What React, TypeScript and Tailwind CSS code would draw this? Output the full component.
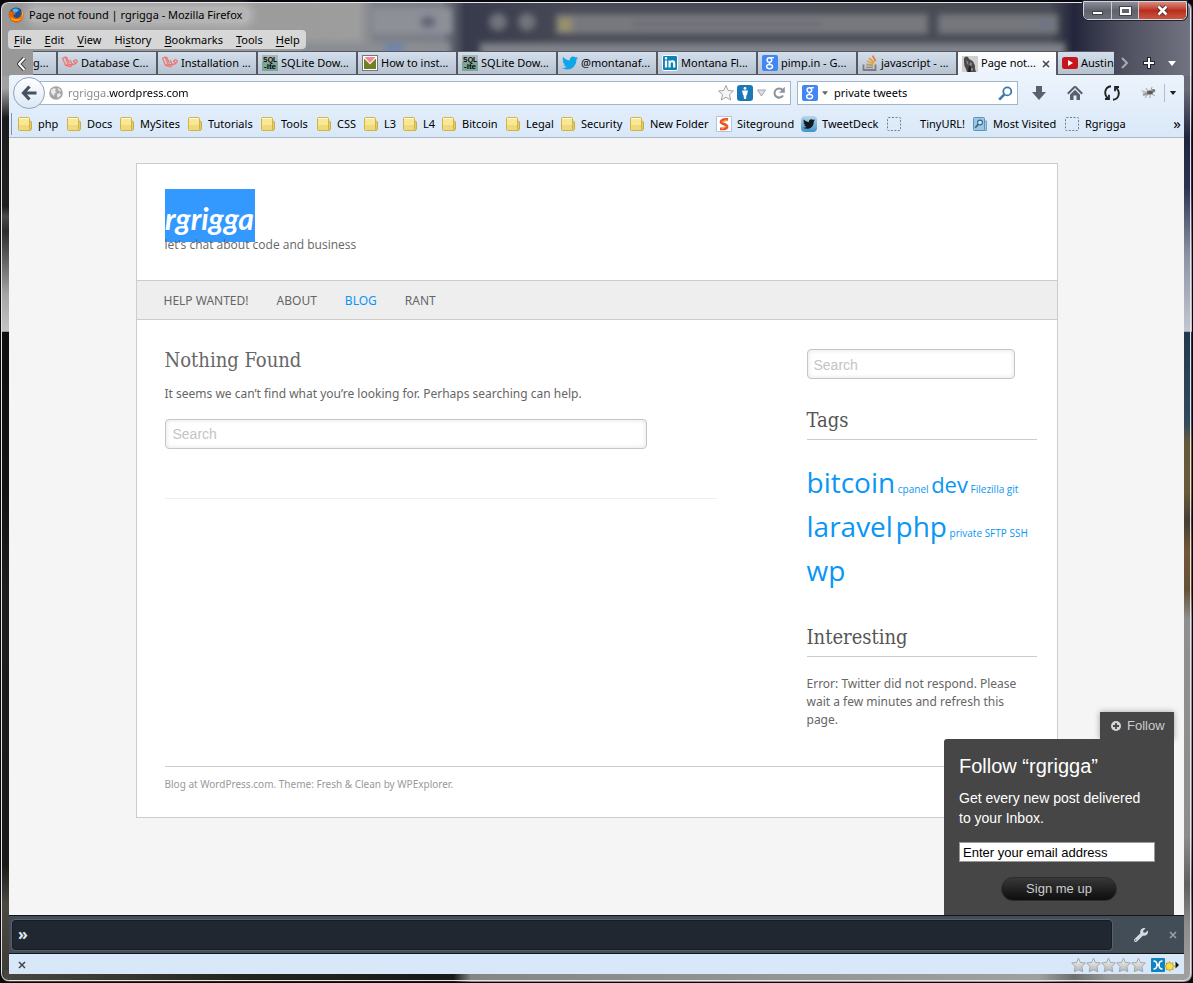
import React from "react";
import { FaTwitter, FaLinkedinIn, FaWrench } from "react-icons/fa";

const uiFont = "font-['Noto_Sans','Open_Sans',sans-serif]";

function Backdrop() {
  return (
    <svg
      className="absolute inset-0 size-full"
      viewBox="0 0 1193 983"
      preserveAspectRatio="none"
      aria-hidden="true"
    >
      <defs>
        <linearGradient id="leftEdge" x1="0" y1="0" x2="0" y2="983" gradientUnits="userSpaceOnUse">
          <stop offset="0" stopColor="#989898" />
          <stop offset="0.09" stopColor="#a2a2a2" />
          <stop offset="0.12" stopColor="#1c1c1c" />
          <stop offset="0.21" stopColor="#202020" />
          <stop offset="0.22" stopColor="#4a4a4a" />
          <stop offset="0.235" stopColor="#2c2c2c" />
          <stop offset="0.27" stopColor="#6c6c6c" />
          <stop offset="0.3" stopColor="#a6a6a6" />
          <stop offset="0.337" stopColor="#c4c4c4" />
          <stop offset="0.338" stopColor="#12100e" />
          <stop offset="0.5" stopColor="#151311" />
          <stop offset="0.6" stopColor="#1f1e1d" />
          <stop offset="0.88" stopColor="#1c1a18" />
          <stop offset="0.92" stopColor="#4b4941" />
          <stop offset="1" stopColor="#3c3a34" />
        </linearGradient>
        <linearGradient id="rightEdge" x1="0" y1="0" x2="0" y2="983" gradientUnits="userSpaceOnUse">
          <stop offset="0" stopColor="#5c5d69" />
          <stop offset="0.09" stopColor="#6b6c78" />
          <stop offset="0.14" stopColor="#20253c" />
          <stop offset="0.19" stopColor="#2b3350" />
          <stop offset="0.26" stopColor="#8e93a4" />
          <stop offset="0.337" stopColor="#c2c7d0" />
          <stop offset="0.338" stopColor="#22384e" />
          <stop offset="0.43" stopColor="#34495a" />
          <stop offset="0.45" stopColor="#66583c" />
          <stop offset="0.5" stopColor="#695a3c" />
          <stop offset="0.53" stopColor="#443e34" />
          <stop offset="0.56" stopColor="#725638" />
          <stop offset="0.6" stopColor="#665138" />
          <stop offset="0.63" stopColor="#8f8f8f" />
          <stop offset="0.85" stopColor="#8c8c8c" />
          <stop offset="0.9" stopColor="#5f5f5f" />
          <stop offset="0.94" stopColor="#8c8c8c" />
          <stop offset="1" stopColor="#a5a5a5" />
        </linearGradient>
        <linearGradient id="bottomEdge" x1="0" y1="0" x2="1193" y2="0" gradientUnits="userSpaceOnUse">
          <stop offset="0" stopColor="#4a4842" />
          <stop offset="0.2" stopColor="#25251f" />
          <stop offset="0.38" stopColor="#181818" />
          <stop offset="0.395" stopColor="#868686" />
          <stop offset="0.87" stopColor="#a0a0a0" />
          <stop offset="0.9" stopColor="#6e6e6e" />
          <stop offset="0.93" stopColor="#989898" />
          <stop offset="1" stopColor="#a0a0a0" />
        </linearGradient>
        <linearGradient id="topEdge" x1="0" y1="0" x2="1193" y2="0" gradientUnits="userSpaceOnUse">
          <stop offset="0" stopColor="#989898" />
          <stop offset="0.3" stopColor="#9d9d9d" />
          <stop offset="0.315" stopColor="#7c7f87" />
          <stop offset="0.37" stopColor="#7b7e88" />
          <stop offset="0.39" stopColor="#383b4c" />
          <stop offset="0.48" stopColor="#484a55" />
          <stop offset="0.88" stopColor="#484a54" />
          <stop offset="0.9" stopColor="#23263b" />
          <stop offset="0.94" stopColor="#4c4e5e" />
          <stop offset="1" stopColor="#747582" />
        </linearGradient>
        <filter id="soft" x="-10%" y="-50%" width="120%" height="200%">
          <feGaussianBlur stdDeviation="3" />
        </filter>
      </defs>
      <rect width="1193" height="983" fill="#111" />
      <rect width="20" height="983" fill="url(#leftEdge)" />
      <rect x="1173" width="20" height="983" fill="url(#rightEdge)" />
      <rect x="4" y="970" width="1185" height="13" fill="url(#bottomEdge)" />
      <rect width="1193" height="76" fill="url(#topEdge)" />
      <g filter="url(#soft)">
        <rect x="300" y="42" width="150" height="40" fill="#8a8d92" />
        <rect x="385" y="44" width="18" height="8" fill="#6b83b0" />
        <rect x="372" y="8" width="80" height="26" fill="#8e9098" />
        <ellipse cx="428" cy="22" rx="8" ry="6" fill="#626679" />
        <circle cx="498" cy="22" r="9" fill="#71737c" />
        <circle cx="527" cy="22" r="9" fill="#71737c" />
        <rect x="556" y="14" width="372" height="20" fill="#77797f" />
        <rect x="558" y="18" width="14" height="14" fill="#96906c" />
        <rect x="632" y="22" width="190" height="4" fill="#696b72" />
        <rect x="938" y="14" width="120" height="20" fill="#75777d" />
        <rect x="480" y="43" width="585" height="40" fill="#7f8288" />
        <rect x="1040" y="20" width="12" height="8" fill="#6a7488" />
      </g>
      <rect x="1.5" y="2.5" width="1189" height="978" rx="7" fill="none" stroke="#e6e6e8" strokeWidth="1" vectorEffect="non-scaling-stroke" />
      <path d="M0 0H1193V983H0Z M1 9V974Q1 981 9 982H1184Q1192 981 1192 974V9Q1192 2 1184 2H9Q1 2 1 9Z" fill="#07070d" fillRule="evenodd" />
    </svg>
  );
}

function FirefoxLogo() {
  return (
    <svg className="size-4 shrink-0" viewBox="0 0 16 16" aria-hidden="true">
      <circle cx="8" cy="7.6" r="7.2" fill="#1c4f93" />
      <path d="M4 3a5 5 0 0 1 7 0L9 5 6 6z" fill="#5cb1e8" />
      <path d="M.8 4.500C.2 10 3 15.600 8.200 15.600c4.800 0 7.600-4 7.400-8.200-.1-2-1-4-2.400-5.200 1 2.400 1 4-.2 5.600-.8 2.600-2.800 3.600-4.800 3.200C6 10.600 5 9 5.400 7.600c1 .2 1.800 0 2.600-.6L6 5.600C5.400 5 4 5 3.400 4.600L3 2.800C2 3.600 1.600 4.600 1.400 5.400z" fill="#e66000" />
      <path d="M1.800 9c1 3.600 3.400 5 6.400 5 3.400 0 5.400-2 6-5-1.200 2.400-3 3.600-5.600 3.600C5.600 12.600 3.400 11 1.800 9z" fill="#ffb52b" />
      <path d="M13.200 2.200c2.200 3 2 6.400.4 8.800.6-3 .6-5.400-.4-8.800z" fill="#ffd23f" />
    </svg>
  );
}

function Laravel() {
  return (
    <svg className="size-4 shrink-0" viewBox="0 0 16 16" fill="none" stroke="#f0746c" strokeWidth="1.2" strokeLinejoin="round" aria-hidden="true">
      <path d="M.6 3.200 3.200 2l3 7.600-2.600.8zM3.200 2l1.600.6 2.800 6M3.600 10.400l5 1.200 2-2-4.200 0M8 5l2.400 4.600 3.400-1L11.600 6l2.200-1.400 1.800 1.800-2 2.200M10.400 9.600l-1.800 2" />
    </svg>
  );
}

function Sqlite() {
  return (
    <svg className="size-4 shrink-0" viewBox="0 0 16 16" aria-hidden="true">
      <rect width="16" height="16" fill="#7ba596" />
      <rect width="16" height="7" fill="#a9b7b5" />
      <text x="1" y="7" fontSize="7" fontWeight="bold" fontFamily="Liberation Sans" fill="#000">SQL</text>
      <text x="2" y="14" fontSize="8" fontWeight="bold" fontFamily="Liberation Sans" fill="#000">-ite</text>
    </svg>
  );
}

function Envelope() {
  return (
    <svg className="size-4 shrink-0" viewBox="0 0 16 16" aria-hidden="true">
      <rect x=".5" y=".5" width="15" height="15" fill="#fff" stroke="#777" />
      <rect x="2" y="2" width="12" height="12" fill="#6f7f24" />
      <path d="M2 2v1.500l6 6 6-6V2z" fill="#fff4e4" />
      <path d="M2.500 2h11L8 8z" fill="#f2859a" />
    </svg>
  );
}

function GoogleG() {
  return (
    <span className="flex size-4 shrink-0 items-center justify-center rounded-xs bg-[#4285f4]" aria-hidden="true">
      <svg className="size-4" viewBox="0 0 16 16" fill="none" stroke="#fff">
        <circle cx="7.400" cy="5" r="2.300" strokeWidth="1.500" />
        <path d="M8.500 2.700H12" strokeWidth="1.200" />
        <path d="M8.200 7.200c-1.600 1-1 1.600.4 2.200" strokeWidth="1.300" />
        <ellipse cx="7.600" cy="11.600" rx="3" ry="2.100" strokeWidth="1.400" />
      </svg>
    </span>
  );
}

function Stack() {
  return (
    <svg className="size-4 shrink-0" viewBox="0 0 16 16" fill="none" aria-hidden="true">
      <path d="M1.500 9.500v5.500h12V9.500" stroke="#7d7d7d" strokeWidth="1.800" />
      <path d="M4 12.400h7" stroke="#919191" strokeWidth="1.600" />
      <path d="M4.200 9.400l7 1" stroke="#c29a5c" strokeWidth="1.600" />
      <path d="M5 6l6.600 2.800" stroke="#e8a23a" strokeWidth="1.600" />
      <path d="M7 3l5.400 4.600" stroke="#ef9123" strokeWidth="1.600" />
      <path d="M10.600.6l3 5.600" stroke="#f0742a" strokeWidth="1.600" />
    </svg>
  );
}

function Thinker() {
  return (
    <svg className="size-4 shrink-0" viewBox="0 0 16 16" aria-hidden="true">
      <rect width="16" height="16" fill="#d0d0d0" />
      <path d="M2 2l2-1.500 2 .5 1 2 2 1 2 1.500 1 2 1 2v3l1 3.500H5l-1-3L2.500 10 2 6z" fill="#4a4a4a" />
      <path d="M4 4l2 2 .5 3.500-1.500-2zM8 6l2 1.500-.5 2.500-2-1zM9 12l2 .5v2H9z" fill="#8f8f8f" />
      <path d="M7 10l2 1-.5 5H6z" fill="#1d1d1d" />
    </svg>
  );
}

function Youtube() {
  return (
    <svg className="size-4 shrink-0" viewBox="0 0 16 16" aria-hidden="true">
      <rect x="0" y="2" width="16" height="12" rx="2.500" fill="#c4161c" />
      <path d="M6 5l5 3-5 3z" fill="#fff" />
    </svg>
  );
}

function Folder() {
  return (
    <svg className="size-4 shrink-0" viewBox="0 0 16 16" aria-hidden="true">
      <path d="M11 5h2.500l1 1v7l-1 1.500H11z" fill="#e6cd62" stroke="#c2a032" strokeWidth=".8" />
      <rect x="1.500" y="1.500" width="11" height="13" rx="1" fill="#f8e795" stroke="#d3b345" />
      <path d="M2 9h10v5H2z" fill="#efd97a" />
      <path d="M2.500 2.500h9" stroke="#fffbe0" />
    </svg>
  );
}

function Siteground() {
  return (
    <svg className="size-4 shrink-0" viewBox="0 0 16 16" fill="none" aria-hidden="true">
      <rect x=".5" y=".5" width="15" height="15" fill="#fff" stroke="#b7c3d8" />
      <path d="M12 3.500C8 2.800 5 4 5 6s6 2 6 4.500S8 13 4 12.800" stroke="#ee4a36" strokeWidth="2.800" />
      <path d="M11 4L6 6M10.500 10l-5 3" stroke="#f5a31f" strokeWidth="1.400" />
    </svg>
  );
}

function TweetDeck() {
  return (
    <span className="flex size-4 shrink-0 items-center justify-center rounded-sm bg-linear-to-b from-[#b9d7ea] to-[#3d93c8]" aria-hidden="true">
      <FaTwitter className="size-3 text-[#101820]" />
    </span>
  );
}

function Dashed() {
  return (
    <svg className="size-4 shrink-0" viewBox="0 0 16 16" aria-hidden="true">
      <rect x="1.500" y="1.500" width="13" height="13" rx="1" fill="none" stroke="#767e88" strokeDasharray="2 1.500" />
    </svg>
  );
}

function MostVisited() {
  return (
    <svg className="size-4 shrink-0" viewBox="0 0 16 16" fill="none" aria-hidden="true">
      <path d="M11 5h3.500v9.500H11z" fill="#a9cbe2" stroke="#5d93b8" strokeWidth=".8" />
      <rect x="1.500" y="1.500" width="11" height="13" rx="1" fill="#9cc6e3" stroke="#5d93b8" />
      <circle cx="8" cy="6.500" r="2.400" fill="#d6ebf8" stroke="#35658a" strokeWidth="1.100" />
      <path d="M6.200 8.400l-3 3.400" stroke="#35658a" strokeWidth="1.600" />
    </svg>
  );
}

function RatingStar() {
  return (
    <svg className="h-[16px] w-[15px]" viewBox="0 0 15 16" aria-hidden="true">
      <defs>
        <linearGradient id="silver" x1="0" y1="0" x2="0" y2="1">
          <stop offset="0" stopColor="#f4f4f4" />
          <stop offset="1" stopColor="#b4b6b8" />
        </linearGradient>
      </defs>
      <path d="M7.500 1.200l1.900 4.300 4.900.4-3.400 3.600.9 5.200-4.300-1.900-4.300 1.900.9-5.200L.7 5.900l4.900-.4z" fill="url(#silver)" stroke="#a4a7aa" strokeLinejoin="round" />
    </svg>
  );
}

function Caret({ className }: { className: string }) {
  return (
    <svg className={className} viewBox="0 0 8 5" aria-hidden="true">
      <path d="M0 0h8L4 5z" fill="currentColor" />
    </svg>
  );
}

function Cross({ className }: { className: string }) {
  return (
    <svg className={className} viewBox="0 0 8 8" fill="none" stroke="currentColor" strokeWidth="1.500" aria-hidden="true">
      <path d="M1 1l6 6M7 1L1 7" />
    </svg>
  );
}

const menus: [string, string, string][] = [
  ["", "F", "ile"],
  ["", "E", "dit"],
  ["", "V", "iew"],
  ["Hi", "s", "tory"],
  ["", "B", "ookmarks"],
  ["", "T", "ools"],
  ["", "H", "elp"],
];

const tabs: { label: string; icon: React.ReactNode; active?: boolean }[] = [
  { label: "Database C...", icon: <Laravel /> },
  { label: "Installation ...", icon: <Laravel /> },
  { label: "SQLite Dow...", icon: <Sqlite /> },
  { label: "How to inst...", icon: <Envelope /> },
  { label: "SQLite Dow...", icon: <Sqlite /> },
  { label: "@montanaf...", icon: <FaTwitter className="size-4 shrink-0 text-[#10a5e8]" /> },
  {
    label: "Montana Fl...",
    icon: (
      <span className="flex size-4 shrink-0 items-center justify-center rounded-xs border border-white bg-[#0b83b8]">
        <FaLinkedinIn className="size-3 text-white" />
      </span>
    ),
  },
  { label: "pimp.in - G...", icon: <GoogleG /> },
  { label: "javascript - ...", icon: <Stack /> },
  { label: "Page not...", icon: <Thinker />, active: true },
];

const bookmarks: { label: string; icon: React.ReactNode; className: string }[] = [
  { label: "php", icon: <Folder />, className: "w-[49px]" },
  { label: "Docs", icon: <Folder />, className: "w-[53px]" },
  { label: "MySites", icon: <Folder />, className: "w-[68px]" },
  { label: "Tutorials", icon: <Folder />, className: "w-[73px]" },
  { label: "Tools", icon: <Folder />, className: "w-[56px]" },
  { label: "CSS", icon: <Folder />, className: "w-[47px]" },
  { label: "L3", icon: <Folder />, className: "w-[39px]" },
  { label: "L4", icon: <Folder />, className: "w-[39px]" },
  { label: "Bitcoin", icon: <Folder />, className: "w-[64px]" },
  { label: "Legal", icon: <Folder />, className: "w-[55px]" },
  { label: "Security", icon: <Folder />, className: "w-[69px]" },
  { label: "New Folder", icon: <Folder />, className: "w-[87px]" },
  { label: "Siteground", icon: <Siteground />, className: "w-[85px]" },
  { label: "TweetDeck", icon: <TweetDeck />, className: "w-[85px]" },
  { label: "TinyURL!", icon: <Dashed />, className: "w-[86px] justify-between pr-[7px]" },
  { label: "Most Visited", icon: <MostVisited />, className: "w-[92px]" },
  { label: "Rgrigga", icon: <Dashed />, className: "w-[64px]" },
];

function TitleBar() {
  return (
    <div className="flex h-[30px] items-start justify-between pr-[6px] pl-2">
      <div className="flex h-[30px] items-center gap-[5px]">
        <FirefoxLogo />
        <h1 className="rounded-full bg-white/25 pr-2 text-[11px] leading-4 text-black shadow-[0_0_8px_4px_rgba(255,255,255,0.25)]">
          Page not found | rgrigga - Mozilla Firefox
        </h1>
      </div>
      <div className="mt-px flex h-[19px] overflow-hidden rounded-b-[5px] border border-[#d5d5dc] outline outline-[#20222e]">
        <button aria-label="Minimize" className="flex w-[28px] items-center justify-center border-r border-[#c9cad2] bg-linear-to-b from-[#8c8e99] via-[#5f616d] to-[#6e707c] pt-1">
          <span className="h-[4px] w-[11px] border border-[#444] bg-white" />
        </button>
        <button aria-label="Maximize" className="flex w-[27px] items-center justify-center border-r border-[#c9cad2] bg-linear-to-b from-[#8c8e99] via-[#5f616d] to-[#6e707c]">
          <span className="h-[8px] w-[11px] border-2 border-white outline outline-[#444]" />
        </button>
        <button aria-label="Close" className="flex w-[47px] items-center justify-center bg-linear-to-b from-[#d98a80] via-[#b92d1b] to-[#c8553f] text-white">
          <svg className="h-[11px] w-[13px]" viewBox="0 0 13 11" aria-hidden="true">
            <path d="M2.500 1.500l8 8M10.500 1.500l-8 8" stroke="#4d1d1d" strokeWidth="4.200" />
            <path d="M2.500 1.500l8 8M10.500 1.500l-8 8" stroke="#fff" strokeWidth="2.600" />
          </svg>
        </button>
      </div>
    </div>
  );
}

function TabStrip() {
  return (
    <div className="mt-[2px] flex h-[24px] items-end px-[9px] text-[11px] text-black">
      <button aria-label="Previous tabs" className="flex h-[23px] w-[24px] items-center justify-center text-white">
        <svg className="h-[14px] w-[9px]" viewBox="0 0 9 14" fill="none" aria-hidden="true">
          <path d="M7.500 1L2 7l5.500 6" stroke="#333" strokeWidth="4" />
          <path d="M7.500 1L2 7l5.500 6" stroke="#fff" strokeWidth="2" />
        </svg>
      </button>
      <button className="flex h-[24px] w-[25px] items-center border-t border-r-2 border-b border-[#555a62] bg-linear-to-b from-[#d3dfec] to-[#b6c2cf]">g...</button>
      {tabs.map((tab, i) => (
        <button
          key={i}
          className={
            tab.active
              ? "flex h-[24px] w-[100px] items-center gap-[3px] border-t border-r-2 border-[#555a62] bg-linear-to-b from-white to-[#eaf2fc] pl-1 whitespace-nowrap"
              : "flex h-[24px] w-[100px] items-center gap-[3px] border-t border-r-2 border-b border-[#555a62] bg-linear-to-b from-[#d3dfec] to-[#b6c2cf] pl-1 whitespace-nowrap"
          }
        >
          {tab.icon}
          <span>{tab.label}</span>
          {tab.active && <Cross className="ml-[3px] size-[8px] shrink-0 text-[#444]" />}
        </button>
      ))}
      <button className="flex h-[24px] w-[56px] items-center gap-[3px] overflow-hidden border-t border-b border-[#555a62] bg-linear-to-b from-[#d3dfec] to-[#b6c2cf] pl-1">
        <Youtube />
        <span>Austin</span>
      </button>
      <div className="flex h-[24px] flex-1 items-center text-white">
        <button aria-label="Next tabs" className="flex w-[22px] justify-center">
          <svg className="h-[12px] w-[8px]" viewBox="0 0 8 12" fill="none" stroke="#a9abb3" strokeWidth="2" aria-hidden="true">
            <path d="M1 1l5 5-5 5" />
          </svg>
        </button>
        <button aria-label="New tab" className="flex w-[26px] justify-center">
          <svg className="size-[12px]" viewBox="0 0 12 12" aria-hidden="true">
            <path d="M6 0v12M0 6h12" stroke="#22232c" strokeWidth="4" />
            <path d="M6 1v10M1 6h10" stroke="#fff" strokeWidth="2" />
          </svg>
        </button>
        <button aria-label="List all tabs" className="flex w-[20px] justify-center">
          <Caret className="h-[5px] w-[8px]" />
        </button>
      </div>
    </div>
  );
}

function NavBar() {
  return (
    <div className="flex h-[36px] items-center pr-[7px] pl-1">
      <button aria-label="Back" className="relative -mr-[6px] flex size-[32px] shrink-0 items-center justify-center rounded-full border border-[#8fa3b8] bg-linear-to-b from-white to-[#dbe8f6]">
        <svg className="h-[16px] w-[16px]" viewBox="0 0 16 16" fill="none" stroke="#46525f" strokeWidth="3.200" aria-hidden="true">
          <path d="M8.500 1.500L2.500 8l6 6.500M3 8h12.500" />
        </svg>
      </button>
      <div className="flex h-[24px] flex-1 items-center border border-[#a3b5c9] bg-white pr-1 pl-2">
        <svg className="mr-[2px] ml-px size-[14px]" viewBox="0 0 14 14" aria-hidden="true">
          <circle cx="7" cy="7" r="6.800" fill="#a4a4a4" />
          <path d="M2 4l3-2 2 1-1 2 2 1-2 1-1 3-3-3zM8 2l3 1 1 3-2-1zM8 8l3-1 1 2-3 3-1-2z" fill="#e9e9e9" />
        </svg>
        <input
          aria-label="Location"
          defaultValue="rgrigga.wordpress.com"
          className="min-w-0 flex-1 bg-[linear-gradient(90deg,#858585_0_43px,#000_43px)] bg-clip-text pl-[3px] text-[11px] text-transparent outline-none"
        />
        <button aria-label="Bookmark this page">
          <svg className="size-[18px]" viewBox="0 0 18 18" aria-hidden="true">
            <path d="M9 1.500l2.200 5 5.300.5-4 3.600 1.200 5.400L9 13.200 4.300 16l1.200-5.400-4-3.600 5.300-.5z" fill="#f5f5f5" stroke="#a3a3a3" />
          </svg>
        </button>
        <button aria-label="Site tools" className="ml-[2px] flex size-[16px] items-center justify-center rounded-[3px] bg-[#1878b8]">
          <svg className="size-[14px]" viewBox="0 0 14 14" fill="#fff" aria-hidden="true">
            <circle cx="7" cy="2.400" r="1.400" />
            <path d="M4 4.500h6L9 9H8.500L8 13H6L5.500 9H5z" />
          </svg>
        </button>
        <button aria-label="Show history" className="ml-1">
          <svg className="h-[8px] w-[9px]" viewBox="0 0 9 8" aria-hidden="true">
            <path d="M.5 1h8l-4 6z" fill="#dde1e6" stroke="#a0a7b0" />
          </svg>
        </button>
        <button aria-label="Reload" className="ml-[6px]">
          <svg className="size-[14px]" viewBox="0 0 14 14" fill="none" aria-hidden="true">
            <path d="M10.600 4A4.600 4.600 0 1 0 11 9.500" stroke="#8a929c" strokeWidth="2" />
            <path d="M12.800.8v6H7z" fill="#8a929c" />
          </svg>
        </button>
      </div>
      <div className="ml-[6px] flex h-[24px] w-[221px] items-center border border-[#a3b5c9] bg-white pr-1 pl-1">
        <GoogleG />
        <button aria-label="Choose search engine" className="ml-1 text-[#666]">
          <Caret className="h-[4px] w-[6px]" />
        </button>
        <input aria-label="Web search" defaultValue="private tweets" className="ml-[6px] min-w-0 flex-1 text-[11px] text-black outline-none" />
        <button aria-label="Search the web">
          <svg className="size-[15px]" viewBox="0 0 15 15" fill="none" stroke="#3c79ad" aria-hidden="true">
            <circle cx="9.300" cy="5.400" r="4" strokeWidth="1.800" />
            <path d="M6.400 8.400L1.200 13.600" strokeWidth="2.600" />
          </svg>
        </button>
      </div>
      <button aria-label="Downloads" className="ml-[13px]">
        <svg className="size-[16px]" viewBox="0 0 16 16" fill="#56616d" aria-hidden="true">
          <path d="M5 1h6v6h4l-7 8-7-8h4z" />
        </svg>
      </button>
      <button aria-label="Home" className="ml-[20px]">
        <svg className="size-[16px]" viewBox="0 0 16 16" aria-hidden="true">
          <path d="M8 1.500L.8 8.800M8 1.500l7.200 7.300" stroke="#56616d" strokeWidth="2" />
          <path d="M8 4.800L3 9.800V15h3.500v-4.500h3V15H13V9.800z" fill="#56616d" />
        </svg>
      </button>
      <button aria-label="Sync" className="ml-[20px]">
        <svg className="size-[18px]" viewBox="0 0 18 18" fill="none" stroke="#222" strokeWidth="1.900" aria-hidden="true">
          <path d="M8 2.200C1.500 3 .5 10.500 5 14.300M10 15.800C16.500 15 17.500 7.500 13 3.700" />
          <path d="M2 15H6V10.800M16 3H12V7.200" strokeWidth="1.800" />
        </svg>
      </button>
      <button aria-label="Add-on" className="ml-[20px]">
        <svg className="size-[16px]" viewBox="0 0 16 16" fill="none" aria-hidden="true">
          <path d="M0 5l6 1 3-1 5-1-4 4-6 3z" fill="#c3c6c8" />
          <path d="M2 10l5-2" stroke="#9a9d9e" strokeWidth="2" />
          <ellipse cx="9" cy="7.500" rx="3" ry="2" fill="#5c5c58" />
          <circle cx="12.500" cy="5.800" r="1.800" fill="#7c7c76" />
          <path d="M7 9l-3 4M9 9.500L9 13M11 9l3 2M7 6L5 3M10 5L11 2" stroke="#8a8a8a" strokeWidth=".8" />
        </svg>
      </button>
      <span className="ml-[7px] h-[18px] w-px bg-[#b0bdcb]" />
      <button aria-label="Toolbar menu" className="ml-1 text-[#222]">
        <Caret className="h-[4px] w-[8px]" />
      </button>
    </div>
  );
}

function BookmarksBar() {
  return (
    <nav aria-label="Bookmarks toolbar" className="flex h-[26px] items-center pl-[2px] text-[11px] text-black">
      <span className="mr-[5px] h-[22px] w-px bg-[#8395a8]" />
      {bookmarks.map((b, i) => (
        <a key={i} href="#" className={"flex shrink-0 items-center gap-[5px] whitespace-nowrap " + b.className}>
          {b.icon}
          <span>{b.label}</span>
        </a>
      ))}
      <button aria-label="More bookmarks" className="mr-[3px] ml-auto pb-[2px] text-[15px] leading-4">
        »
      </button>
    </nav>
  );
}

function Sidebar() {
  return (
    <aside className="w-[230px] shrink-0 pt-[29px]">
      <input
        type="search"
        aria-label="Search this site"
        placeholder="Search"
        className="block h-[30px] w-[208px] rounded-[4px] border border-[#c6c6c6] px-[6px] pt-[2px] font-['Liberation_Sans',sans-serif] text-[14px] shadow-[inset_0_0_5px_rgba(0,0,0,0.12)] placeholder:text-[#c4c4c4]"
      />
      <h2 className="mt-[29px] border-b border-[#ccc] pb-[6px] font-['DejaVu_Serif_Condensed','DejaVu_Serif',serif] text-[20px] leading-[25px] text-[#555]">Tags</h2>
      <div className="mt-[24px] font-['Open_Sans',sans-serif] text-[10px] leading-[37px] text-[#0a96f5]">
        <a href="#" className="text-[28px]">bitcoin</a> <a href="#">cpanel</a> <a href="#" className="text-[22px]">dev</a> <a href="#">Filezilla</a> <a href="#">git</a>{" "}
        <a href="#" className="text-[28px]">laravel</a> <a href="#" className="text-[28px]">php</a> <a href="#">private</a> <a href="#">SFTP</a> <a href="#">SSH</a>{" "}
        <a href="#" className="text-[28px]">wp</a>
      </div>
      <h2 className="mt-[29px] border-b border-[#ccc] pb-[6px] font-['DejaVu_Serif_Condensed','DejaVu_Serif',serif] text-[20px] leading-[25px] text-[#555]">Interesting</h2>
      <p className="mt-[18px] text-[12px] leading-[18px]">Error: Twitter did not respond. Please wait a few minutes and refresh this page.</p>
    </aside>
  );
}

function FollowPanel() {
  return (
    <section className="absolute right-[10px] bottom-0 flex w-[230px] flex-col items-end font-['Liberation_Sans',sans-serif]">
      <button className="flex h-[27px] w-[74px] items-center gap-[6px] bg-[#464646] pl-[11px] text-[13px] text-[#ccc] shadow-[0_0_6px_rgba(0,0,0,0.35)]">
        <svg className="size-[10px]" viewBox="0 0 10 10" aria-hidden="true">
          <circle cx="5" cy="5" r="5" fill="#d5d5d5" />
          <path d="M5 2v6M2 5h6" stroke="#464646" strokeWidth="1.800" />
        </svg>
        Follow
      </button>
      <form className="relative h-[176px] w-full rounded-tl-[3px] bg-[#464646] px-[15px] pt-[14px]" onSubmit={(e) => e.preventDefault()}>
        <h2 className="text-[20px] leading-[26px] text-white">Follow “rgrigga”</h2>
        <p className="mt-[9px] pr-3 text-[14px] leading-[20px] text-white">Get every new post delivered to your Inbox.</p>
        <input
          type="text"
          aria-label="Email address"
          defaultValue="Enter your email address"
          className="mt-[14px] block h-[20px] w-[196px] border border-[#999] bg-white px-[3px] text-[13px] text-black"
        />
        <button className="mx-auto mt-[15px] block h-[24px] w-[116px] rounded-full border border-[#2c2c2c] bg-linear-to-b from-[#383838] to-[#0e0e0e] text-[13px] leading-[22px] text-[#ccc]">
          Sign me up
        </button>
      </form>
    </section>
  );
}

function Page() {
  return (
    <main className="relative flex-1 bg-[#f5f5f5] pt-[25px] pb-[90px] text-[#666]">
      <div className="mx-auto w-full max-w-[922px] border border-[#ccc] bg-white">
        <header className="h-[116px] pt-[25px] pl-[28px]">
          <a href="#" className="flex h-[53px] w-[90px] items-center justify-center bg-[#3399ff] pt-[5px] font-['Lato',sans-serif] text-[30px] font-bold text-white italic">
            rgrigga
          </a>
          <p className="-mt-[6px] font-['Open_Sans',sans-serif] text-[12px] leading-[18px]">let’s chat about code and business</p>
        </header>
        <nav aria-label="Site" className="flex h-[40px] items-center gap-[28px] border-y border-[#ccc] bg-[#eee] pt-px pl-[27px] text-[12px]">
          <a href="#">HELP WANTED!</a>
          <a href="#">ABOUT</a>
          <a href="#" className="text-[#0a96f5]">BLOG</a>
          <a href="#">RANT</a>
        </nav>
        <div className="flex justify-between pr-5 pl-7">
          <article className="w-[552px] pt-[26px]">
            <h2 className="font-['DejaVu_Serif_Condensed','DejaVu_Serif',serif] text-[20px] leading-[28px]">Nothing Found</h2>
            <p className="mt-[11px] text-[12px] leading-[18px]">It seems we can’t find what you’re looking for. Perhaps searching can help.</p>
            <input
              type="search"
              aria-label="Search posts"
              placeholder="Search"
              className="mt-[16px] block h-[30px] w-[482px] rounded-[4px] border border-[#c6c6c6] px-[7px] font-['Liberation_Sans',sans-serif] text-[14px] shadow-[inset_0_0_5px_rgba(0,0,0,0.12)] placeholder:text-[#c4c4c4]"
            />
            <hr className="mt-[49px] border-[#eee]" />
          </article>
          <Sidebar />
        </div>
        <footer className="mt-[37px] mr-5 ml-7 border-t border-[#ccc] pt-2 pb-[23px] text-[10px] leading-[19px] text-[#999]">
          <a href="#">Blog at WordPress.com</a>. Theme: Fresh &amp; Clean by <a href="#">WPExplorer</a>.
        </footer>
      </div>
      <FollowPanel />
    </main>
  );
}

export default function App() {
  return (
    <div className={"relative min-h-screen " + uiFont}>
      <Backdrop />
      <div className="relative flex min-h-screen flex-col pb-[9px]">
        <TitleBar />
        <div className="ml-2 flex h-[19px] w-fit items-center gap-[13px] rounded-[4px] bg-white/60 px-[6px] pt-px text-[11px] text-black">
          {menus.map(([before, key, after]) => (
            <button key={key + after}>
              {before}
              <span className="underline underline-offset-2">{key}</span>
              {after}
            </button>
          ))}
        </div>
        <TabStrip />
        <div className="mx-[9px] flex flex-1 flex-col">
          <div className="rounded-t-[2px] border-b border-[#a9b9ca] bg-linear-to-b from-[#ecf3fc] to-[#d9e8f8]">
            <NavBar />
            <BookmarksBar />
          </div>
          <Page />
          <div className="flex h-[39px] items-center border-y border-[#12161b] bg-[#434d58] pl-[3px] text-[#c5ccd4]">
            <label className="flex h-[30px] flex-1 items-center rounded-[3px] border border-[#171c22] bg-[#202731] pl-[5px] text-[16px] text-[#dbe6f2] outline outline-[#56616d]">
              <span className="pb-[2px] font-bold">»</span>
              <input aria-label="Command line" className="ml-2 h-full min-w-0 flex-1 bg-transparent text-[12px] outline-none" />
            </label>
            <button aria-label="Developer tools" className="ml-[22px]">
              <FaWrench className="size-[14px] text-[#d3dae1]" />
            </button>
            <button aria-label="Close developer toolbar" className="mr-[7px] ml-[21px]">
              <Cross className="size-[8px] text-[#9aa3ad]" />
            </button>
          </div>
          <div className="flex h-[20px] items-center bg-[#d9e8f8] pt-px pr-[5px] pl-[9px]">
            <button aria-label="Close add-on bar">
              <Cross className="size-[8px] text-[#444]" />
            </button>
            <div className="ml-auto flex items-center">
              {[1, 2, 3, 4, 5].map((n) => (
                <button key={n} aria-label={"Rate " + n}>
                  <RatingStar />
                </button>
              ))}
              <svg className="ml-[5px] h-[16px] w-[28px]" viewBox="0 0 28 16" aria-hidden="true">
                <rect y="1" width="14" height="14" rx="1" fill="#0e83c0" />
                <path d="M2.500 4c3 0 3.500 1.500 3.500 4s-.5 4-3.500 4M11.500 4C8.500 4 8 5.500 8 8s.5 4 3.500 4M5.500 8h3" stroke="#fff" strokeWidth="1.600" fill="none" />
                <path d="M18.500 4.500l1.200 2 2.300-.7-.4 2.300 2.100 1.100-2 1.200.5 2.300-2.300-.5-1.300 2-1.200-2-2.300.6.5-2.300-2-1.300 2-1.100-.5-2.300 2.300.6z" fill="#f5e04c" stroke="#b89b18" strokeWidth=".8" />
                <path d="M24.500 4.500L28 8l-3.500 3.500z" fill="#111" />
              </svg>
            </div>
          </div>
        </div>
      </div>
    </div>
  );
}
